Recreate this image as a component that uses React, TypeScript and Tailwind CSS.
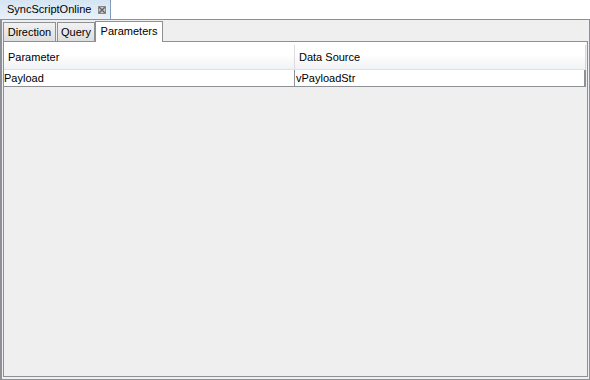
import React from 'react';

const CloseGlyph = () => (
  <svg width="8" height="8" viewBox="0 0 8 8" className="block">
    <rect x="0" y="0" width="8" height="8" fill="#cfcfcf" />
    <path d="M1 1 L7 7 M7 1 L1 7" stroke="#6b6b6b" strokeWidth="1.6" />
    <rect x="0.5" y="0.5" width="7" height="7" fill="none" stroke="#8a8a8a" strokeWidth="1" />
  </svg>
);

interface TabProps {
  label: string;
  active?: boolean;
  width: string;
}

const Tab: React.FC<TabProps> = ({ label, active, width }) =>
  active ? (
    <div
      className={`${width} h-[21px] mt-[1px] -mb-px bg-white border border-b-0 border-[#8d9095] flex items-center justify-center relative z-10`}
    >
      <span className="-mt-[2px]">{label}</span>
    </div>
  ) : (
    <div
      className={`${width} h-[19px] mt-[2px] bg-gradient-to-b from-[#f2f2f2] to-[#dedede] border border-b-0 border-[#8d9095] flex items-center justify-center`}
    >
      <span className="mt-[1px]">{label}</span>
    </div>
  );

export default function App() {
  return (
    <div
      className="w-[590px] h-[380px] bg-white flex flex-col text-[11px] text-black overflow-hidden"
      style={{ fontFamily: '"Liberation Sans", Arial, sans-serif' }}
    >
      {/* view tab strip */}
      <div className="h-[19px] flex shrink-0">
        <div className="w-[111px] h-[19px] bg-gradient-to-b from-[#d5e4f3] to-[#e9f1f9] border-r border-[#7f9cbc] flex items-center pl-[7px] pr-[4px]">
          <span className="flex-1">SyncScriptOnline</span>
          <CloseGlyph />
        </div>
      </div>

      {/* outer frame */}
      <div className="flex-1 flex flex-col border border-[#8d9095] border-l-2 bg-[#efefef] px-[1px] pb-[2px]">
        {/* sub tabs */}
        <div className="h-[21px] flex items-start shrink-0">
          <Tab label="Direction" width="w-[53px]" />
          <div className="ml-[1px]">
            <Tab label="Query" width="w-[38px]" />
          </div>
          <Tab label="Parameters" width="w-[68px]" active />
        </div>

        {/* tab content panel */}
        <div className="flex-1 border border-[#8d9095] bg-[#efefef] flex flex-col pr-[1px]">
          {/* table header */}
          <div className="bg-white pt-[3px] shrink-0">
            <div className="h-[25px] flex bg-gradient-to-b from-white from-40% to-[#f1f2f4] border-b border-[#e2e2e2] border-r border-r-[#d6d6d6]">
              <div className="w-[291px] border-r border-[#dcdcdc] flex items-center pl-[4px]">
                Parameter
              </div>
              <div className="flex-1 flex items-center pl-[4px]">Data Source</div>
            </div>
          </div>
          {/* row */}
          <div className="h-[17px] flex bg-white border-b border-[#8d9095] border-r-2 border-r-[#8d9095] shrink-0">
            <div className="w-[291px] border-r border-[#8d9095] flex items-center">Payload</div>
            <div className="flex-1 flex items-center pl-[1px]">vPayloadStr</div>
          </div>
          <div className="flex-1" />
        </div>
      </div>
    </div>
  );
}
